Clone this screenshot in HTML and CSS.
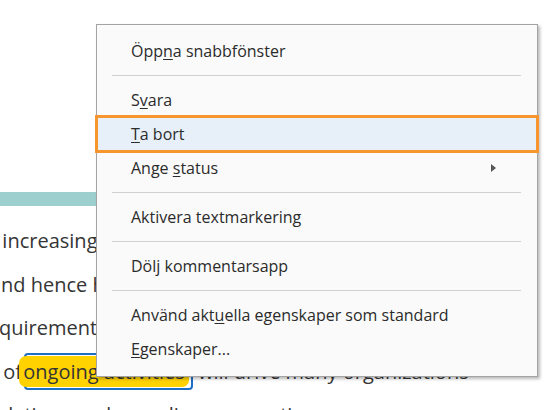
FILE: index.html
```html
<!DOCTYPE html>
<html lang="sv">
<head>
<meta charset="utf-8">
<title>Kontextmeny</title>
<link rel="stylesheet" href="styles.css">
</head>
<body>
<div class="doc">
  <div class="band"></div>
  <div class="lines">
    <div class="line l1">, increasing</div>
    <div class="line l2">nd hence h</div>
    <div class="line l3">quirements</div>
    <div class="line l4">t of <span class="focus"><span class="mark">ongoing activities</span></span> will drive many organizations</div>
    <div class="line l5">ulations and compliance reporting</div>
  </div>
</div>

<div class="menu">
  <div class="item">Öpp<span class="key">n</span>a snabbfönster</div>
  <div class="sep"></div>
  <div class="item">S<span class="key">v</span>ara</div>
  <div class="item active"><span class="key">T</span>a bort</div>
  <div class="item sub">Ange <span class="key">s</span>tatus<span class="arrow"></span></div>
  <div class="sep"></div>
  <div class="item">Aktivera textmarkering</div>
  <div class="sep"></div>
  <div class="item">Dölj kommentarsapp</div>
  <div class="sep"></div>
  <div class="item">Använd akt<span class="key">u</span>ella egenskaper som standard</div>
  <div class="item"><span class="key">E</span>genskaper...</div>
</div>
</body>
</html>
```

FILE: styles.css
```css
html, body {
  margin: 0;
  padding: 0;
  background: #ffffff;
}

body {
  width: 546px;
  height: 410px;
  overflow: hidden;
  position: relative;
  font-family: "Open Sans", "Noto Sans", sans-serif;
}

.doc {
  padding-top: 192px;
}

.band {
  width: 480px;
  height: 14px;
  background: #9ccfcd;
}

.lines {
  margin-top: 13px;
  color: #353535;
  font-size: 20px;
  line-height: 43.5px;
  white-space: nowrap;
}

.l1 { text-indent: -8px; }
.l2 { text-indent: 1px; }
.l3 { text-indent: -1px; }
.l4 { text-indent: -9px; }
.l5 { text-indent: -4px; }

.focus {
  display: inline-block;
  line-height: 27px;
  padding: 3px 2px;
  border: 2px solid #1f6fc5;
  border-radius: 4px;
  margin-left: -3px;
}

.mark {
  background: #ffd200;
  border-radius: 7px;
  padding: 2px 4px;
}

.menu {
  position: absolute;
  left: 96px;
  top: 24px;
  width: 440px;
  padding: 9px 0 10px;
  background: #fafafa;
  border: 1px solid #a3a3a3;
  box-shadow: 2px 2px 3px rgba(0, 0, 0, 0.28);
  color: #2b2b2b;
  font-size: 16px;
}

.item {
  position: relative;
  height: 34px;
  line-height: 34px;
  padding-left: 34px;
  white-space: nowrap;
}

.item.active {
  background: #e7f0f9;
  outline: 3px solid #f7962e;
  outline-offset: -1px;
}

.key {
  text-decoration: underline;
  text-underline-offset: 2px;
}

.arrow {
  position: absolute;
  right: 41px;
  top: 13px;
  width: 0;
  height: 0;
  border-top: 4px solid transparent;
  border-bottom: 4px solid transparent;
  border-left: 5px solid #555555;
}

.sep {
  height: 1px;
  margin: 7px 16px 7px 15px;
  background: #d0d0d0;
}
```
